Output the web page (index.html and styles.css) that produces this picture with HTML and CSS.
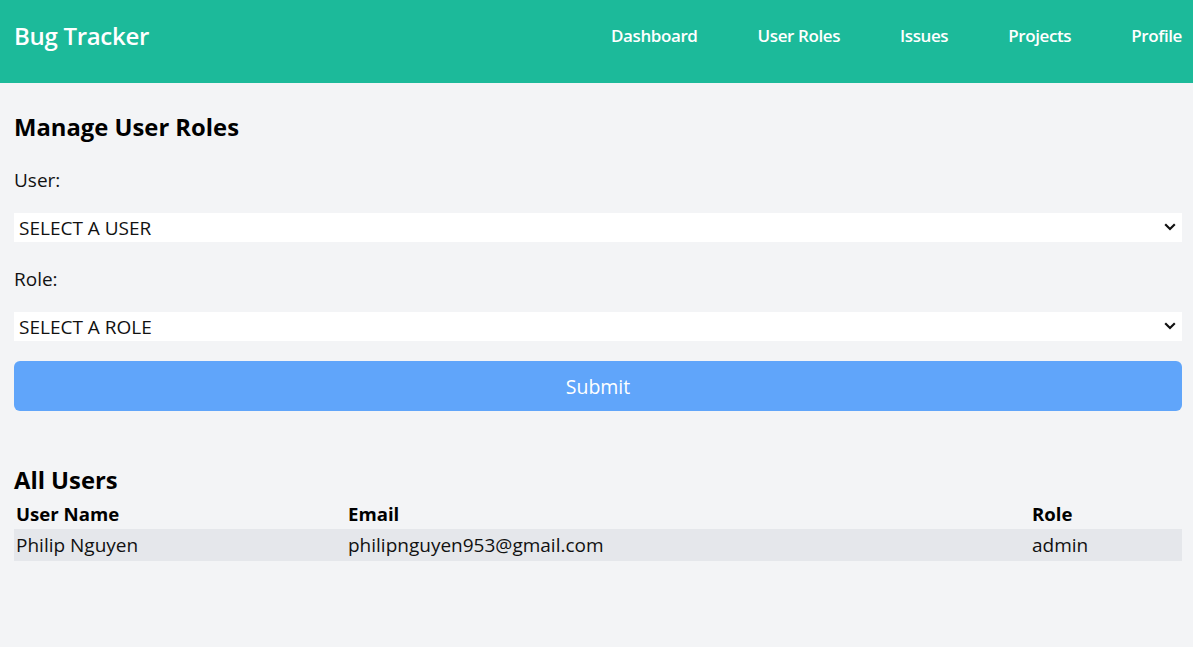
FILE: index.html
```html
<!DOCTYPE html>
<html lang="en">
<head>
<meta charset="utf-8">
<title>Bug Tracker</title>
<link rel="stylesheet" href="styles.css">
</head>
<body>
<header class="topbar">
  <div class="brand">Bug Tracker</div>
  <nav class="nav">
    <a class="nav-link" href="#">Dashboard</a>
    <a class="nav-link" href="#">User Roles</a>
    <a class="nav-link" href="#">Issues</a>
    <a class="nav-link" href="#">Projects</a>
    <a class="nav-link" href="#">Profile</a>
  </nav>
</header>
<main class="content">
  <h2 class="title">Manage User Roles</h2>
  <form class="role-form">
    <label class="field-label" for="user">User:</label>
    <div class="select-wrap">
      <select id="user" class="select"><option>SELECT A USER</option></select>
      <svg class="chevron" width="12" height="8" viewBox="0 0 12 8"><path d="M1.2 1.3 L6 6 L10.8 1.3" fill="none" stroke="#111" stroke-width="2.2"/></svg>
    </div>
    <label class="field-label" for="role">Role:</label>
    <div class="select-wrap">
      <select id="role" class="select"><option>SELECT A ROLE</option></select>
      <svg class="chevron" width="12" height="8" viewBox="0 0 12 8"><path d="M1.2 1.3 L6 6 L10.8 1.3" fill="none" stroke="#111" stroke-width="2.2"/></svg>
    </div>
    <button type="button" class="submit">Submit</button>
  </form>
  <h2 class="title users-title">All Users</h2>
  <table class="users">
    <thead>
      <tr><th class="col-name">User Name</th><th class="col-email">Email</th><th>Role</th></tr>
    </thead>
    <tbody>
      <tr class="row"><td>Philip Nguyen</td><td>philipnguyen953@gmail.com</td><td>admin</td></tr>
    </tbody>
  </table>
</main>
</body>
</html>
```
FILE: styles.css
```css
* { box-sizing: border-box; }
html, body { margin: 0; padding: 0; }
body {
  background: #f3f4f6;
  font-family: "Open Sans", "Noto Sans", sans-serif;
  color: #111;
}
.topbar {
  height: 83px;
  background: #1cba9a;
  display: flex;
  align-items: center;
  justify-content: space-between;
  padding: 0 11px 12px 14px;
}
.brand {
  color: #fff;
  font-size: 24px;
  font-weight: 600;
  letter-spacing: -0.3px;
}
.nav { display: flex; gap: 60px; }
.nav-link {
  color: #fff;
  text-decoration: none;
  font-size: 17px;
  font-weight: 600;
  letter-spacing: -0.4px;
}
.content { padding: 28px 11px 40px 14px; }
.title {
  margin: 0;
  font-size: 23.8px;
  line-height: 32px;
  font-weight: 700;
  color: #000;
}
.role-form { display: flex; flex-direction: column; }
.field-label {
  display: block;
  margin-top: 23px;
  font-size: 19px;
  line-height: 28px;
}
.select-wrap { position: relative; margin-top: 19px; }
.select {
  appearance: none;
  -webkit-appearance: none;
  display: block;
  width: 100%;
  height: 29px;
  border: 0;
  border-radius: 0;
  background: #fff;
  font-family: inherit;
  font-size: 19px;
  color: #111;
  padding: 0 5px;
}
.chevron { position: absolute; right: 6px; top: 10px; pointer-events: none; }
.submit {
  margin-top: 20px;
  height: 50px;
  width: 100%;
  border: 0;
  border-radius: 6px;
  background: #60a5fa;
  color: #fff;
  font-family: inherit;
  font-size: 19.5px;
}
.users-title { margin-top: 53px; }
.users {
  width: 100%;
  border-collapse: collapse;
  margin-top: 1px;
}
.users th, .users td {
  text-align: left;
  padding: 0 2px;
  height: 32px;
  font-size: 19px;
}
.users th { font-weight: 700; color: #000; font-size: 18.6px; }
.col-name { width: 332px; }
.col-email { width: 684px; }
.row { background: #e5e7eb; }
```
